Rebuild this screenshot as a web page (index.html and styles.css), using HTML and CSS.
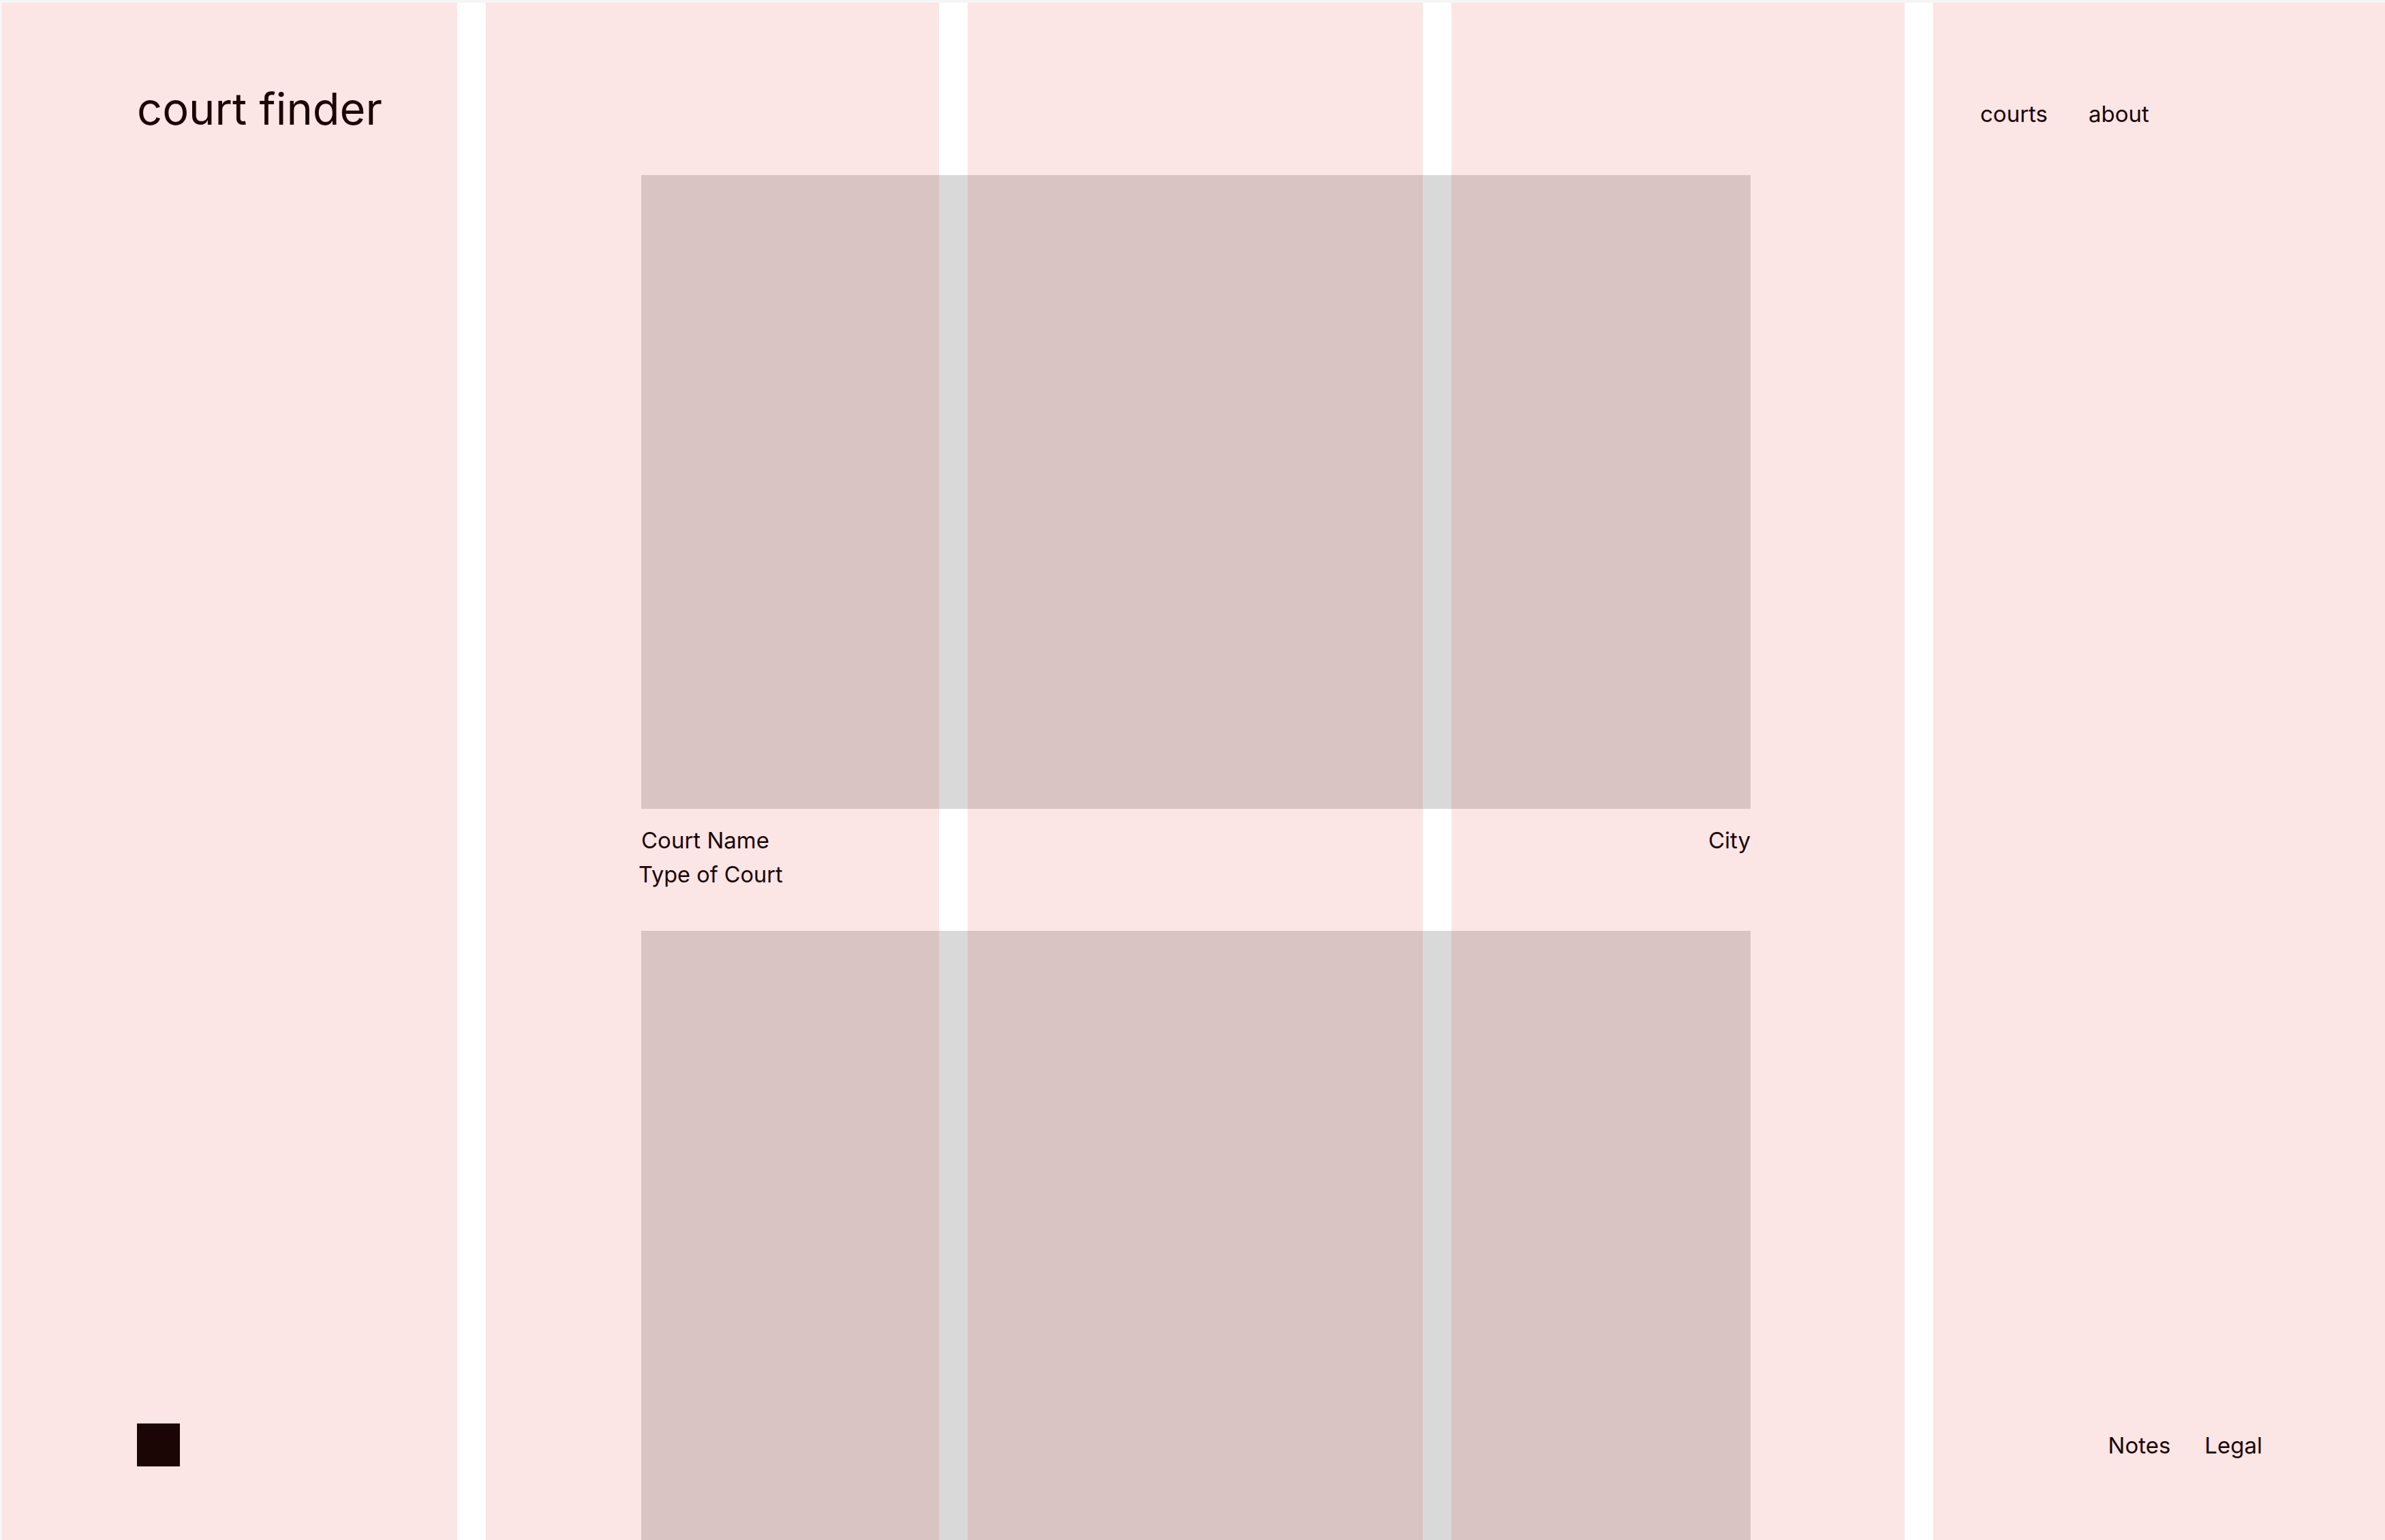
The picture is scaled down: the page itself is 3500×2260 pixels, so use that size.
FILE: index.html
```html
<!DOCTYPE html>
<html lang="en">
<head>
<meta charset="utf-8">
<title>court finder</title>
<link rel="stylesheet" href="styles.css">
</head>
<body>
<div class="frame">
  <aside class="side side-left">
    <div class="logo">court finder</div>
    <div class="mark"></div>
  </aside>
  <main class="feed">
    <article class="card">
      <div class="photo"></div>
      <div class="meta">
        <span class="name">Court Name</span>
        <span class="city">City</span>
      </div>
      <div class="type">Type of Court</div>
    </article>
    <article class="card">
      <div class="photo"></div>
    </article>
  </main>
  <aside class="side side-right">
    <nav class="nav">
      <a class="link" href="#">courts</a>
      <a class="link" href="#">about</a>
    </nav>
    <footer class="foot">
      <a class="link" href="#">Notes</a>
      <a class="link" href="#">Legal</a>
    </footer>
  </aside>
  <div class="grid-overlay">
    <div class="col"></div>
    <div class="col"></div>
    <div class="col"></div>
    <div class="col"></div>
    <div class="col"></div>
  </div>
</div>
</body>
</html>
```

FILE: styles.css
```css
html, body {
  margin: 0;
  padding: 0;
}

body {
  background: #f5f5f5;
  font-family: Inter, "Noto Sans", sans-serif;
  color: #000;
}

.frame {
  position: relative;
  margin: 4px 0 0 3px;
  width: 3497px;
  height: 2256px;
  background: #ffffff;
  overflow: hidden;
  display: grid;
  grid-template-columns: 938px 1628px 1fr;
}

.side {
  display: flex;
  flex-direction: column;
  justify-content: space-between;
  height: 2256px;
  box-sizing: border-box;
}

.side-left {
  padding: 116px 0 108px 198px;
}

.logo {
  font-size: 65px;
  line-height: normal;
  font-weight: 400;
}

.mark {
  width: 63px;
  height: 63px;
  background: #000;
}

.side-right {
  padding: 143px 180px 119px 337px;
}

.nav {
  display: flex;
  gap: 60px;
}

.foot {
  display: flex;
  justify-content: flex-end;
  gap: 50px;
}

.link {
  font-size: 33px;
  line-height: normal;
  color: #000;
  text-decoration: none;
}

.feed {
  padding-top: 253px;
  display: flex;
  flex-direction: column;
  gap: 57px;
}

.photo {
  height: 930px;
  background: #d9d9d9;
}

.meta {
  display: flex;
  justify-content: space-between;
  padding-top: 21px;
  font-size: 33px;
  line-height: 50px;
}

.type {
  font-size: 32.5px;
  line-height: 50px;
  margin: 1px 0 0 -4px;
}

.grid-overlay {
  position: absolute;
  inset: 0;
  display: grid;
  grid-template-columns: 668px 665px 668px 665px 1fr;
  gap: 42px;
  pointer-events: none;
}

.col {
  background: rgba(220, 40, 40, 0.12);
}
```
